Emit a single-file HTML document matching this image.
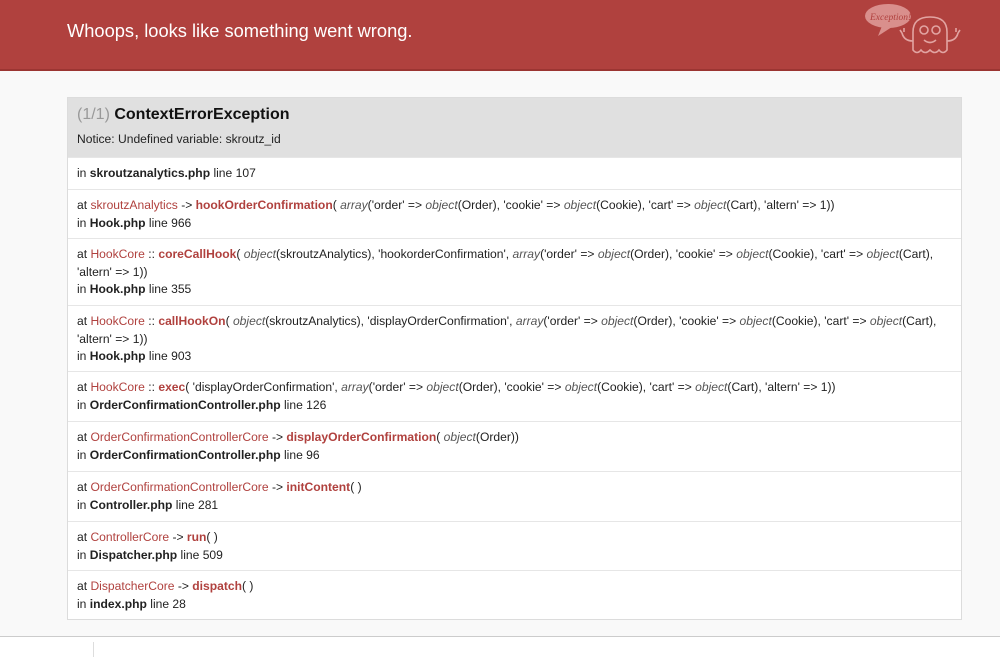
<!DOCTYPE html>
<html><head><meta charset="utf-8"><style>
*{margin:0;padding:0;box-sizing:border-box}
body{width:1000px;height:657px;overflow:hidden;background:#f9f9f9;font-family:"Liberation Sans",Arial,sans-serif;color:#222;position:relative}
.hdr{position:absolute;left:0;top:0;width:1000px;height:71px;background:#b0413e;border-bottom:2px solid #9b3532}
.hdr h1{position:absolute;left:67px;top:20px;font-size:18.3px;font-weight:normal;color:#fff}
.box{position:absolute;left:67px;top:97px;width:895px;border:1px solid #dcdcdc;background:#fff}
.bh{height:59px;background:#e0e0e0;padding:8px 0 0 9px}
.bh h2{font-size:16px;font-weight:bold;color:#111}
.bh h2 span{color:#999;font-weight:normal}
.bh p{font-size:12.1px;margin-top:8px;color:#222}
.r{border-top:1px solid #e6e6e6;padding:7px 9px 0 9px;font-size:12.1px;line-height:17.5px;color:#222}
.c{color:#b0413e}.m{color:#b0413e;font-weight:bold}
i{color:#555}
.ft{position:absolute;left:0;top:636px;width:1000px;height:21px;background:#fff;border-top:1px solid #ccc}
.vl{position:absolute;left:93px;top:642px;width:1px;height:15px;background:#ddd}
</style></head><body>
<div class="hdr"><h1>Whoops, looks like something went wrong.</h1>
<svg style="position:absolute;left:860px;top:0px" width="110" height="64" viewBox="0 0 110 64" fill="none" stroke="#e2a4a2" stroke-width="1.6">
<ellipse cx="28" cy="16" rx="23" ry="12" fill="#d98f8c" stroke="none"/>
<path d="M22 26 L 18 36 L 32 27" fill="#d98f8c" stroke="none"/>
<text x="10" y="20" font-family="Liberation Serif,serif" font-style="italic" font-size="9.5" fill="#b0413e" stroke="none">Exception!</text>
<path d="M53 50 L53 32 Q53 17 70 17 Q87 17 87 32 L87 50 Q83 55 79 50 Q75 55 70 50 Q65 55 61 50 Q57 55 53 50Z"/>
<circle cx="64" cy="30" r="4"/><circle cx="76" cy="30" r="4"/>
<path d="M64 40 Q70 45 76 40"/>
<path d="M53 41 Q44 41 42 33 M42 33 l-2 -3 M44 32 l0 -4 M87 41 Q96 41 98 33 M98 33 l2 -3 M96 32 l0 -4"/>
</svg></div>
<div class="box">
<div class="bh"><h2><span>(1/1)</span> ContextErrorException</h2><p>Notice: Undefined variable: skroutz_id</p></div>
<div class="r" style="height:32px">in <b>skroutzanalytics.php</b> line 107</div>
<div class="r" style="height:49px">at <span class="c">skroutzAnalytics</span> -&gt; <span class="m">hookOrderConfirmation</span>( <i>array</i>('order' =&gt; <i>object</i>(Order), 'cookie' =&gt; <i>object</i>(Cookie), 'cart' =&gt; <i>object</i>(Cart), 'altern' =&gt; 1))<br>in <b>Hook.php</b> line 966</div>
<div class="r" style="height:67px">at <span class="c">HookCore</span> :: <span class="m">coreCallHook</span>( <i>object</i>(skroutzAnalytics), 'hookorderConfirmation', <i>array</i>('order' =&gt; <i>object</i>(Order), 'cookie' =&gt; <i>object</i>(Cookie), 'cart' =&gt; <i>object</i>(Cart),<br>'altern' =&gt; 1))<br>in <b>Hook.php</b> line 355</div>
<div class="r" style="height:66px">at <span class="c">HookCore</span> :: <span class="m">callHookOn</span>( <i>object</i>(skroutzAnalytics), 'displayOrderConfirmation', <i>array</i>('order' =&gt; <i>object</i>(Order), 'cookie' =&gt; <i>object</i>(Cookie), 'cart' =&gt; <i>object</i>(Cart),<br>'altern' =&gt; 1))<br>in <b>Hook.php</b> line 903</div>
<div class="r" style="height:50px">at <span class="c">HookCore</span> :: <span class="m">exec</span>( 'displayOrderConfirmation', <i>array</i>('order' =&gt; <i>object</i>(Order), 'cookie' =&gt; <i>object</i>(Cookie), 'cart' =&gt; <i>object</i>(Cart), 'altern' =&gt; 1))<br>in <b>OrderConfirmationController.php</b> line 126</div>
<div class="r" style="height:50px">at <span class="c">OrderConfirmationControllerCore</span> -&gt; <span class="m">displayOrderConfirmation</span>( <i>object</i>(Order))<br>in <b>OrderConfirmationController.php</b> line 96</div>
<div class="r" style="height:50px">at <span class="c">OrderConfirmationControllerCore</span> -&gt; <span class="m">initContent</span>( )<br>in <b>Controller.php</b> line 281</div>
<div class="r" style="height:49px">at <span class="c">ControllerCore</span> -&gt; <span class="m">run</span>( )<br>in <b>Dispatcher.php</b> line 509</div>
<div class="r" style="height:49px">at <span class="c">DispatcherCore</span> -&gt; <span class="m">dispatch</span>( )<br>in <b>index.php</b> line 28</div>
</div>
<div class="ft"></div><div class="vl"></div>
</body></html>
